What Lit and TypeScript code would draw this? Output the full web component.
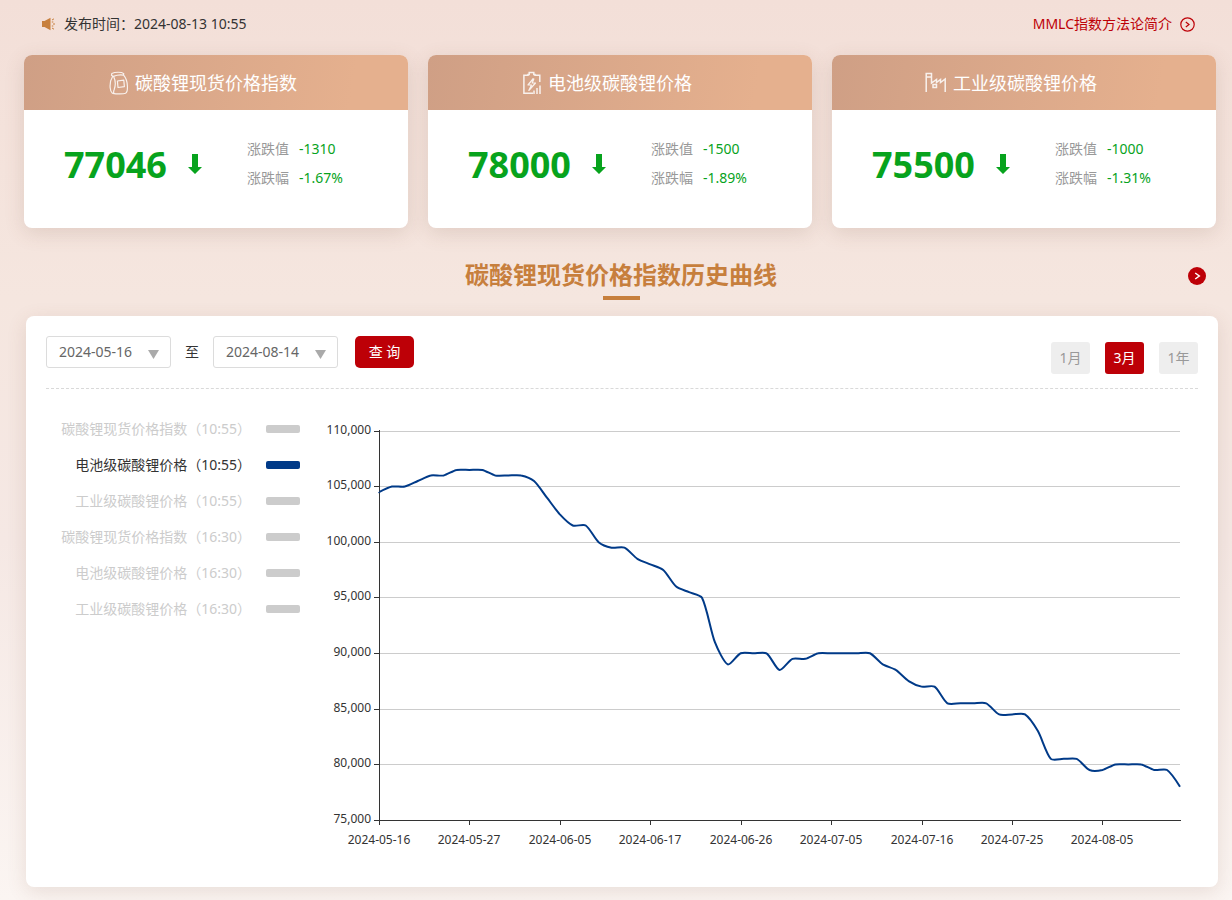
import { LitElement, html, svg, css } from "lit";
import { customElement, property, state } from "lit/decorators.js";
import { classMap } from "lit/directives/class-map.js";

type Pt = { x: number; y: number };

const VALUES = [
  104500, 105000, 105000, 105500, 106000, 106000, 106500, 106500, 106500, 106000, 106000,
  106000, 105500, 104000, 102500, 101500, 101500, 100000, 99500, 99500, 98500, 98000, 97500,
  96000, 95500, 95000, 91000, 89000, 90000, 90000, 90000, 88500, 89500, 89500, 90000, 90000,
  90000, 90000, 90000, 89000, 88500, 87500, 87000, 87000, 85500, 85500, 85500, 85500, 84500,
  84500, 84500, 83000, 80500, 80500, 80500, 79500, 79500, 80000, 80000, 80000, 79500, 79500,
  78000,
];
const DATES = [
  "2024-05-16", "2024-05-27", "2024-06-05", "2024-06-17", "2024-06-26",
  "2024-07-05", "2024-07-16", "2024-07-25", "2024-08-05",
];
const LABEL_EVERY = 7;
const SMOOTH = 0.25;

/** Cubic path through all points; tangents follow the chord of the neighbours. */
function smoothPath(pts: Pt[]): string {
  let d = `M${pts[0].x} ${pts[0].y}`;
  let out = pts[0];
  for (let i = 1; i < pts.length; i++) {
    const prev = pts[i - 1];
    const p = pts[i];
    const next = pts[i + 1];
    let inn = p;
    let nextOut = p;
    if (next) {
      const a = Math.hypot(p.x - prev.x, p.y - prev.y);
      const b = Math.hypot(next.x - p.x, next.y - p.y);
      const vx = (next.x - prev.x) * SMOOTH;
      const vy = (next.y - prev.y) * SMOOTH;
      const r = b / (a + b);
      inn = { x: p.x - vx * (1 - r), y: p.y - vy * (1 - r) };
      nextOut = { x: p.x + vx * r, y: p.y + vy * r };
    }
    d += `C${[out.x, out.y, inn.x, inn.y, p.x, p.y].map((n) => n.toFixed(2)).join(" ")}`;
    out = nextOut;
  }
  return d;
}

@customElement("price-chart")
class PriceChart extends LitElement {
  static styles = css`
    :host { display: block; min-width: 0; }
    svg { display: block; width: 100%; height: 440px; }
    text { font-size: 12px; fill: #333; }
    .grid { stroke: #ccc; shape-rendering: crispEdges; }
    .axis { stroke: #333; shape-rendering: crispEdges; }
    .line { fill: none; stroke: #003a88; stroke-width: 2; stroke-linejoin: bevel; }
  `;
  @state() private width = 882;
  private observer = new ResizeObserver(([e]) => {
    if (e.contentRect.width > 0) this.width = Math.round(e.contentRect.width);
  });
  connectedCallback() {
    super.connectedCallback();
    this.observer.observe(this);
  }
  disconnectedCallback() {
    super.disconnectedCallback();
    this.observer.disconnect();
  }
  render() {
    const left = 63;
    const right = this.width - 18;
    const top = 11;
    const bottom = 400;
    const step = (right - left) / (VALUES.length - 1);
    const y = (v: number) => bottom - ((v - 75000) / 35000) * (bottom - top);
    const pts = VALUES.map((v, i) => ({ x: left + i * step, y: y(v) }));
    const ticks = [75000, 80000, 85000, 90000, 95000, 100000, 105000, 110000];
    return html`<svg role="img" aria-label="电池级碳酸锂价格">
      ${ticks.map((t) => {
        const ty = Math.round(y(t) - 0.3) + 0.5;
        return svg`
          <line class="grid" x1=${left} x2=${right} y1=${ty} y2=${ty}></line>
          <line class="axis" x1=${left - 5} x2=${left} y1=${ty} y2=${ty}></line>
          <text x=${left - 8} y=${ty + 2} text-anchor="end">${t.toLocaleString("en-US")}</text>`;
      })}
      <line class="axis" x1=${left + 0.5} x2=${left + 0.5} y1=${top - 1} y2=${bottom + 1}></line>
      <line class="axis" x1=${left} x2=${right + 1} y1=${bottom + 0.5} y2=${bottom + 0.5}></line>
      ${DATES.map((d, i) => {
        const tx = Math.round(left + i * LABEL_EVERY * step);
        return svg`
          <line class="axis" x1=${tx + 0.5} x2=${tx + 0.5} y1=${bottom} y2=${bottom + 5}></line>
          <text x=${tx} y=${bottom + 24} text-anchor="middle">${d}</text>`;
      })}
      <path class="line" d=${smoothPath(pts)}></path>
    </svg>`;
  }
}

const ICONS = {
  bag: html`<svg width="20" height="24" viewBox="0 0 20 24" fill="none" stroke="currentColor" stroke-width="1.2" stroke-linecap="round" stroke-linejoin="round">
    <path d="M2.800 2.600C6 .8 12.500 .8 14.800 2.600L14.400 4.200C11 3.400 7 4.400 4.200 5.400L2.500 4.200Z M3.600 5.500C1.400 9 .8 13 1.200 17C1.400 19.500 2 21 3.200 22C4.400 22.900 7 22.900 9 22.900C12 23 15 22.900 16.500 22.300C18.200 21.500 18.600 19 18.400 15C18.200 10.500 17 7 14.600 4.200M4.800 6C6.800 10 6.400 15 5.200 18.500C4.600 20 4.400 21 4.800 22.300"></path>
    <path d="M8.400 10L14.800 9.200L15.400 15.600L9 16.500Z"></path></svg>`,
  battery: html`<svg width="20" height="24" viewBox="0 0 20 24" fill="none" stroke="currentColor" stroke-width="1.500">
    <path d="M11 22.200H1.900V4.200H6M13 4.200H17.800V11M6 5V3.500H7.200V1.500H11.800V3.500H13V5"></path>
    <path stroke-width="1.200" stroke-linejoin="round" d="M11.300 7.500L6 14H9.500L6.800 19.500L13.500 12H10.200L12 7.500"></path>
    <path d="M12 23V19.500M15 23V17M18 23V14.500"></path></svg>`,
  factory: html`<svg width="22" height="24" viewBox="0 0 22 24" fill="none" stroke="currentColor" stroke-width="1.500">
    <path d="M1.200 21V2.500H6.500V12L11.500 8.500V11.500L15.500 8.500V11.500L20.200 8V21M1.200 6H6.500"></path>
    <path d="M8 13.500H11.500V16.500H8Z"></path></svg>`,
};

@customElement("price-card")
class PriceCard extends LitElement {
  static styles = css`
    :host {
      display: block; background: #fff; border-radius: 8px; overflow: hidden;
      box-shadow: 0 5px 20px rgba(120, 80, 60, 0.16);
    }
    .head {
      display: flex; align-items: center; justify-content: center; gap: 6px; height: 55px;
      padding-right: 26px; color: #fff;
      background: linear-gradient(100deg, #cf9f85, #e5b08e 85%);
    }
    .head svg { flex: none; opacity: 0.85; }
    h2 { margin: 0; font-size: 18px; font-weight: 400; line-height: 24px; }
    .body {
      display: grid; grid-template-columns: 124px 14px 1fr; align-items: center;
      height: 118px; padding: 0 40px; box-sizing: border-box; color: #07a31d;
    }
    .value { font-size: 36px; font-weight: 700; line-height: 48px; padding-bottom: 8px; }
    .arrow { display: block; margin-bottom: 10px; }
    dl {
      display: grid; grid-template-columns: auto 1fr; column-gap: 10px; row-gap: 9px;
      margin: 0 0 12px 45px; font-size: 14px; line-height: 20px;
    }
    dt { color: #999; }
    dd { margin: 0; }
  `;
  @property() name = "";
  @property() icon: keyof typeof ICONS = "bag";
  @property() value = "";
  @property() change = "";
  @property() percent = "";
  render() {
    return html`
      <div class="head">${ICONS[this.icon]}<h2>${this.name}</h2></div>
      <div class="body">
        <span class="value">${this.value}</span>
        <svg class="arrow" width="14" height="20" viewBox="0 0 14 20" fill="currentColor" aria-hidden="true"><path d="M4 0h6v13h4l-7 7l-7-7h4z"></path></svg>
        <dl><dt>涨跌值</dt><dd>${this.change}</dd><dt>涨跌幅</dt><dd>${this.percent}</dd></dl>
      </div>`;
  }
}

@customElement("app-root")
class AppRoot extends LitElement {
  static styles = css`
    :host {
      display: block; min-height: 100vh; box-sizing: border-box; padding: 0 16px 13px 24px;
      font-family: "Noto Sans", "Noto Sans CJK SC", sans-serif; font-size: 14px; color: #333;
      background: linear-gradient(180deg, #f3dfd8, #f5e6df 33%, #f5e8e4 60%, #fbf5f2);
    }
    button, input { font: inherit; box-sizing: border-box; }
    .top { display: flex; justify-content: space-between; align-items: center; height: 55px; padding: 0 21px 7px 17px; box-sizing: border-box; }
    .published, .method { display: flex; align-items: center; gap: 8px; }
    .method { color: #bd0007; text-decoration: none; }
    .caption { padding-bottom: 1px; line-height: 20px; }
    .cards { display: grid; grid-template-columns: repeat(3, 1fr); gap: 20px; }
    .title { display: grid; grid-template-columns: 1fr auto 1fr; align-items: center; height: 88px; padding: 8px 10px 0 12px; box-sizing: border-box; }
    h1 {
      grid-column: 2; display: flex; flex-direction: column; align-items: center; gap: 3px;
      margin: 5px 0 0; font-size: 24px; font-weight: 700; line-height: 36px; color: #c77f3d;
    }
    h1::after { content: ""; width: 37px; height: 4px; background: #c77f3d; }
    .more { justify-self: end; display: block; height: 18px; }
    .more svg { display: block; }
    .panel {
      margin: 0 -2px 0 2px; padding: 20px 20px 27px; box-sizing: border-box;
      background: #fff; border-radius: 8px; box-shadow: 0 5px 20px rgba(120, 80, 60, 0.14);
    }
    .bar { display: flex; align-items: flex-start; padding-bottom: 14px; border-bottom: 1px dashed #d9d9d9; }
    .date { position: relative; display: block; width: 125px; height: 32px; }
    .date input {
      width: 100%; height: 100%; padding: 0 12px 2px; border: 1px solid #dcdcdc; border-radius: 3px;
      color: #666; background: #fff;
    }
    .date svg { position: absolute; right: 12px; top: 14px; }
    .to { padding: 0 14px; line-height: 32px; }
    .query {
      width: 59px; height: 32px; margin-left: 17px; padding: 0 0 2px; border: 0; border-radius: 5px;
      background: #bd0007; color: #fff;
    }
    .ranges { display: flex; gap: 15px; margin: 6px 0 0 auto; }
    .range { width: 39px; height: 32px; padding: 0 0 2px; border: 0; border-radius: 3px; background: #eee; color: #999; }
    .range.on { background: #bd0007; color: #fff; }
    .content { display: grid; grid-template-columns: 254px 1fr; column-gap: 16px; padding-top: 22px; }
    .legend { margin: 0; padding: 0; list-style: none; }
    .series {
      display: flex; align-items: center; justify-content: flex-end; gap: 15px; width: 100%;
      height: 36px; padding: 0; border: 0; background: none; color: #ccc;
    }
    .swatch { width: 34px; height: 8px; border-radius: 2px; background: #ccc; }
    .series.on { color: #333; }
    .series.on .swatch { background: #003a88; }
    price-chart { margin-top: 9px; }
  `;
  @state() private range = "3月";
  @state() private series = 1;

  private dateField(label: string, value: string) {
    return html`<label class="date"><input aria-label=${label} type="text" .value=${value} />
      <svg width="11" height="9" viewBox="0 0 11 9" fill="#aaa" aria-hidden="true"><path d="M0 0h11L5.500 9z"></path></svg></label>`;
  }

  render() {
    const names = ["碳酸锂现货价格指数", "电池级碳酸锂价格", "工业级碳酸锂价格"];
    const series = ["10:55", "16:30"].flatMap((t) => names.map((n) => `${n}（${t}）`));
    return html`
      <header class="top">
        <span class="published">
          <svg width="15" height="14" viewBox="0 0 15 14" fill="#c77f3d" aria-hidden="true">
            <path d="M1 4h2.500L9.500.8v12.400L3.500 10H1z"></path>
            <path d="M11 3l2-1.200M12 7H14M11 11l2 1.200M10.800 5h1.500M10.800 9h1.500" stroke="#c77f3d"></path>
          </svg>
          <span class="caption">发布时间：2024-08-13 10:55</span>
        </span>
        <a class="method" href="#method"><span class="caption">MMLC指数方法论简介</span>
          <svg width="15" height="15" viewBox="0 0 15 15" fill="none" stroke="#bd0007" stroke-width="1.200" aria-hidden="true"><circle cx="7.500" cy="7.500" r="6.700"></circle><path d="M5.800 5L9 7.500L5.800 10"></path></svg>
        </a>
      </header>
      <section class="cards">
        <price-card icon="bag" name=${names[0]} value="77046" change="-1310" percent="-1.67%"></price-card>
        <price-card icon="battery" name=${names[1]} value="78000" change="-1500" percent="-1.89%"></price-card>
        <price-card icon="factory" name=${names[2]} value="75500" change="-1000" percent="-1.31%"></price-card>
      </section>
      <div class="title">
        <h1>碳酸锂现货价格指数历史曲线</h1>
        <a class="more" href="#history" aria-label="更多">
          <svg width="18" height="18" viewBox="0 0 18 18" fill="none"><circle cx="9" cy="9" r="9" fill="#bd0007"></circle><path d="M7.200 6L11.300 9L7.200 12" stroke="#fff" stroke-width="1.500"></path></svg>
        </a>
      </div>
      <main class="panel">
        <div class="bar">
          ${this.dateField("开始日期", "2024-05-16")}
          <span class="to">至</span>
          ${this.dateField("结束日期", "2024-08-14")}
          <button class="query" type="button">查 询</button>
          <div class="ranges">
            ${["1月", "3月", "1年"].map((r) => html`<button type="button"
              class=${classMap({ range: true, on: r === this.range })}
              @click=${() => (this.range = r)}>${r}</button>`)}
          </div>
        </div>
        <div class="content">
          <ul class="legend">
            ${series.map((s, i) => html`<li><button type="button"
              class=${classMap({ series: true, on: i === this.series })}
              @click=${() => (this.series = i)}><span class="caption">${s}</span><span class="swatch"></span></button></li>`)}
          </ul>
          <price-chart></price-chart>
        </div>
      </main>`;
  }
}
